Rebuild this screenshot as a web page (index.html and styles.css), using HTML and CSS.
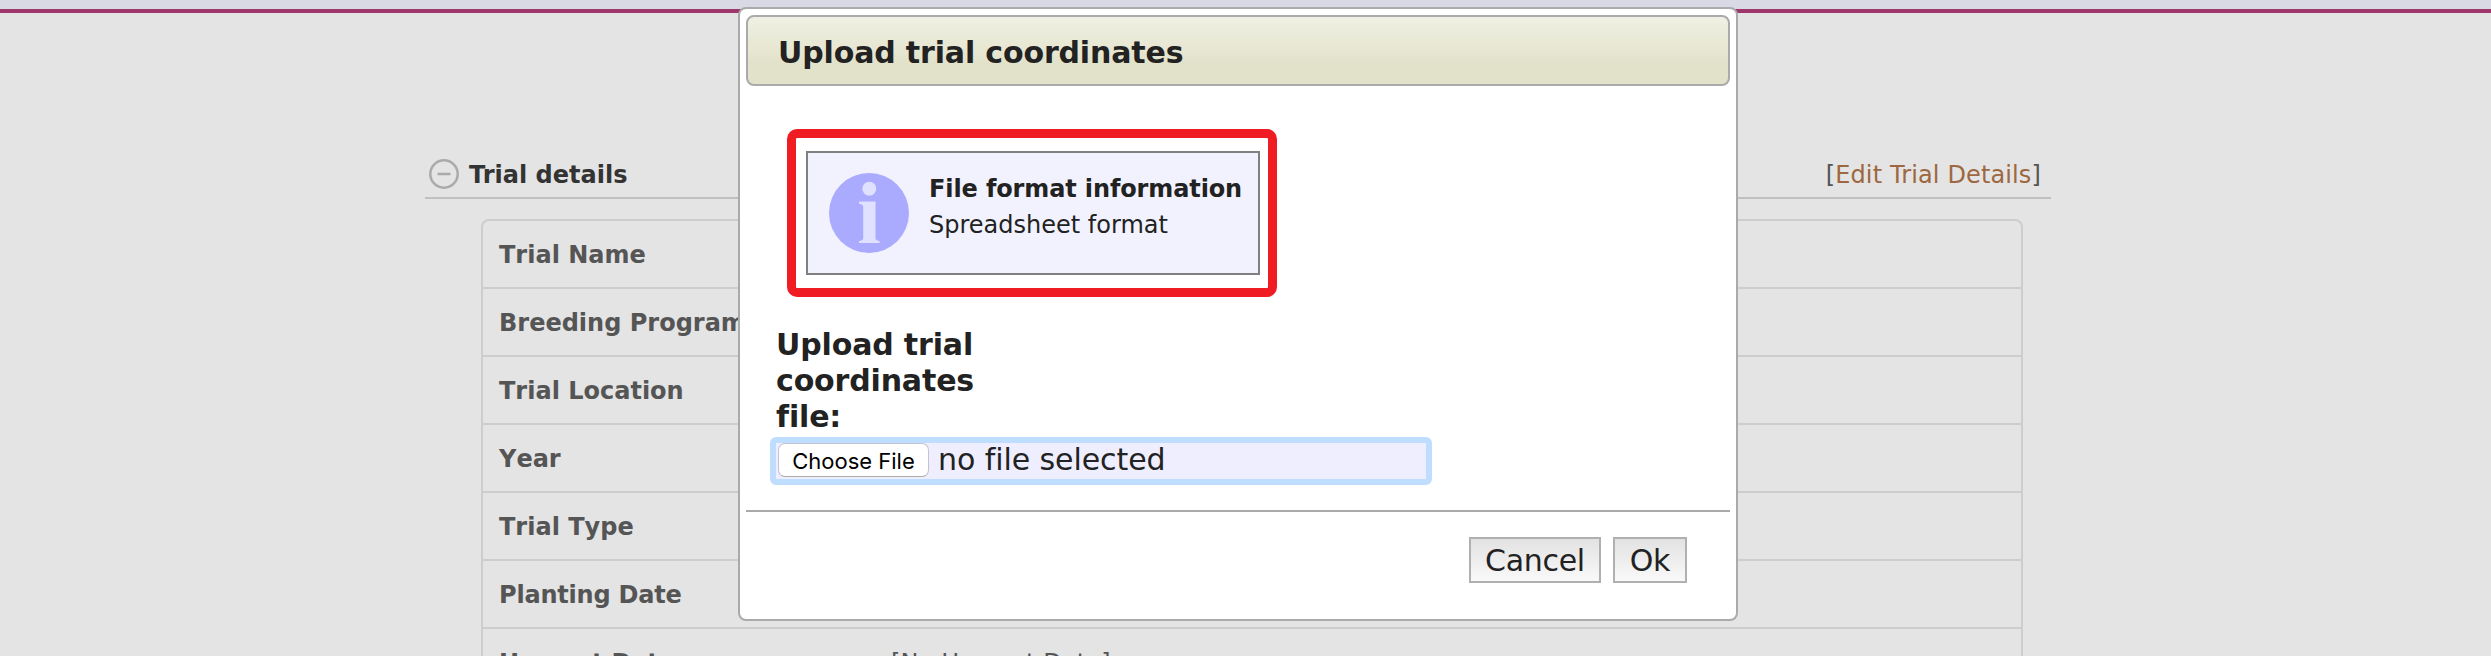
FILE: index.html
```html
<!DOCTYPE html>
<html lang="en">
<head>
<meta charset="utf-8">
<title>Trial details</title>
<link rel="stylesheet" href="styles.css">
</head>
<body>
<header class="topbar"></header>
<main class="page">
  <div class="section-head">
    <svg class="toggle" viewBox="0 0 30 30"><circle cx="15" cy="15" r="13.7"/><path d="M8.5 15h13"/></svg>
    <h2 class="section-title">Trial details</h2>
    <p class="edit">[<a class="edit-link">Edit Trial Details</a>]</p>
  </div>
  <div class="details">
    <div class="row"><b class="name">Trial Name</b></div>
    <div class="row"><b class="name">Breeding Program</b></div>
    <div class="row"><b class="name">Trial Location</b></div>
    <div class="row"><b class="name">Year</b></div>
    <div class="row"><b class="name">Trial Type</b></div>
    <div class="row"><b class="name tight">Planting Date</b></div>
    <div class="row"><b class="name tight">Harvest Date</b><span class="value">[No Harvest Date]</span></div>
  </div>
</main>
<section class="dialog" role="dialog">
  <h1 class="dialog-title">Upload trial coordinates</h1>
  <div class="dialog-body">
    <div class="highlight">
      <div class="info">
        <svg class="info-icon" viewBox="0 0 80 80"><circle class="disc" cx="40" cy="40" r="40"/><circle class="mark" cx="40.300" cy="15.800" r="7"/><path class="mark" d="M30 28.500H46.500V65Q46.500 67.500 50.500 68V70H30V68Q34.200 67.500 34.200 65V34Q34.200 31.200 30 30.700Z"/></svg>
        <div class="info-text"><b class="info-head">File format information</b><span>Spreadsheet format</span></div>
      </div>
    </div>
    <div class="label">Upload trial<br>coordinates<br>file:</div>
    <div class="file"><span class="choose">Choose File</span><span class="nofile">no file selected</span></div>
  </div>
  <footer class="dialog-foot"><button class="btn">Cancel</button><button class="btn">Ok</button></footer>
</section>
</body>
</html>
```
FILE: styles.css
```css
* { box-sizing: border-box; }
body { margin: 0; height: 656px; overflow: hidden; position: relative; background: #e4e4e4; font-family: Verdana, "DejaVu Sans", sans-serif; color: #222; }
.topbar { height: 13px; background: #d9d9e5; border-bottom: 4px solid #9f376c; }
.page { width: 1626px; margin-left: 425px; padding-top: 142px; }
.section-head { display: flex; align-items: center; height: 44px; border-bottom: 2px solid #c0c0c0; padding: 0 10px 4px 4px; }
.toggle { width: 30px; height: 30px; fill: none; stroke: #a9aaaa; stroke-width: 2.5; }
.section-title { margin: 0 auto 0 10px; padding-top: 2px; font-size: 24px; line-height: 30px; color: #333; }
.edit { margin: 0; padding-top: 2px; font-size: 24px; line-height: 30px; letter-spacing: 0.13px; color: #555; }
.edit-link { color: #9d6841; }
.details { width: 1542px; margin: 20px 0 0 56px; border: 2px solid #cdcdcd; border-radius: 8px; }
.row { display: flex; align-items: center; height: 68px; padding: 1px 0 0 16px; border-bottom: 2px solid #cdcdcd; font-size: 24px; color: #555; }
.name { width: 392px; font-kerning: none; }
.tight { letter-spacing: -0.2px; }
.value { letter-spacing: 0.13px; }
.dialog { position: absolute; left: 738px; top: 7px; width: 1000px; height: 614px; padding: 6px; background: #fff; border: 2px solid #aaa; border-radius: 8px; }
.dialog-title { margin: 0; height: 71px; padding-left: 30px; border: 2px solid #aaa; border-radius: 8px; background: linear-gradient(#f0f0e4, #e2e2ca 70%); font-size: 30px; line-height: 72px; letter-spacing: -0.15px; }
.dialog-body { height: 424px; padding: 43px 24px 0; }
.highlight { width: 490px; height: 168px; margin-left: 17px; padding: 13px 10px; border: 9px solid #ef1c24; border-radius: 10px; }
.info { display: flex; width: 454px; height: 124px; padding: 20px 0 0 21px; border: 2px solid #808080; background: #f2f2ff; white-space: nowrap; }
.info-icon { width: 80px; height: 80px; margin-right: 20px; }
.disc { fill: #aaf; }
.mark { fill: #e0e0ff; }
.info-text { display: grid; align-content: start; margin-top: -2px; font-size: 24px; line-height: 36px; }
.info-head { letter-spacing: -0.12px; }
.label { margin: 30px 0 0 6px; font-size: 30px; font-weight: bold; line-height: 36px; letter-spacing: -0.15px; }
.file { display: flex; align-items: flex-start; width: 662px; height: 48px; margin-top: 2px; border: 6px solid #bfdeff; border-radius: 6px; background: #eef; }
.choose { width: 151px; height: 34px; margin-left: 2px; border: 1px solid #c4c2d0; border-bottom-color: #aaa; border-radius: 7px; background: #fff; color: #000; font: 22px/34px Inter, sans-serif; text-align: center; }
.nofile { margin-left: 9px; font-size: 30px; line-height: 34px; letter-spacing: -0.08px; }
.dialog-foot { display: flex; justify-content: flex-end; gap: 12px; height: 86px; padding: 25px 43px 0 0; border-top: 2px solid #aaa; }
.btn { width: 132px; height: 46px; padding: 1px 0 0; border: 2px solid #b0b0b0; background: linear-gradient(#e2e2e2, #f9f9f9); font: 30px/42px Verdana, "DejaVu Sans", sans-serif; letter-spacing: -0.3px; color: #222; }
.btn + .btn { width: 74px; }
```
